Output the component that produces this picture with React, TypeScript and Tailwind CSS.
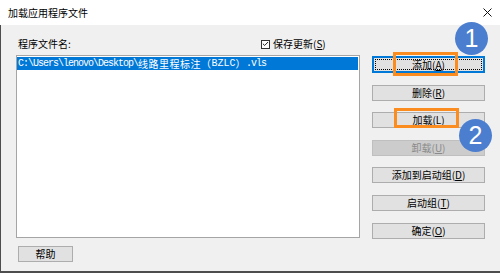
import { Check } from "lucide-react";

const buttons = [
  { label: "删除", key: "R" },
  { label: "加载", key: "L" },
  { label: "卸载", key: "U", disabled: true },
  { label: "添加到启动组", key: "D" },
  { label: "启动组", key: "T" },
  { label: "确定", key: "O" },
];

function Mnemonic({ label, k }: { label: string; k: string }) {
  return (
    <span>
      {label}(<span className="underline underline-offset-1">{k}</span>)
    </span>
  );
}

export default function App() {
  return (
    <div className="relative h-[274px] w-[500px] overflow-hidden bg-white font-['Noto_Sans_CJK_SC','Microsoft_YaHei',sans-serif] text-black">
      <div className="flex h-[25px] items-center justify-between pl-[8px] pr-[8px]">
        <span className="text-[10px] leading-none">加载应用程序文件</span>
        <svg width="9" height="9" viewBox="0 0 9 9" className="text-[#111]">
          <path d="M0.5 0.5 L8.5 8.5 M8.5 0.5 L0.5 8.5" stroke="currentColor" strokeWidth="1" />
        </svg>
      </div>

      <div className="flex h-[248px] border-b-2 border-l border-[#4d4d4d] bg-[#f0f0f0]">
        <div className="ml-[15px] flex w-[344px] flex-col pt-[12px]">
          <div className="flex h-[14px] items-center pl-[2px]">
            <span className="w-[243px] text-[10px] leading-none">程序文件名:</span>
            <div className="flex items-center gap-[3px]">
              <span className="flex h-[9px] w-[9px] items-center justify-center border border-[#333] bg-white">
                <Check size={8} strokeWidth={3} />
              </span>
              <span className="text-[10px] leading-none">
                <Mnemonic label="保存更新" k="S" />
              </span>
            </div>
          </div>

          <div className="mt-[4px] h-[183px] border border-[#a5a5a5] bg-white">
            <div className="mr-[1px] mt-[1px] flex h-[13px] items-center whitespace-nowrap bg-[#0078d7] pl-[1px] text-white">
              <span className="font-['Liberation_Mono',monospace] text-[10px] tracking-[-1px]">C:\Users\lenovo\Desktop\</span>
              <span className="text-[10px] tracking-[0.5px]">线路里程标注（</span>
              <span className="font-['Liberation_Mono',monospace] text-[10px] tracking-[0px]">BZLC</span>
              <span className="text-[10px] tracking-[0.5px]">）</span>
              <span className="font-['Liberation_Mono',monospace] text-[10px] tracking-[-1px]">.vls</span>
            </div>
          </div>

          <button className="ml-[2px] mt-[8px] flex h-[16px] w-[55px] items-center justify-center border border-[#adadad] bg-[#e1e1e1] text-[10px] leading-none">
            帮助
          </button>
        </div>

        <div className="ml-[12px] flex w-[113px] flex-col gap-[11.6px] pt-[31px]">
          <button className="flex h-[17px] items-center justify-center border-2 border-[#0078d7] bg-[#e1e1e1] text-[10px] leading-none outline-1 outline-offset-[-4px] outline-black outline-dotted">
            <Mnemonic label="添加" k="A" />
          </button>
          {buttons.map((b) => (
            <button
              key={b.label}
              className={[
                "flex h-[16px] items-center justify-center border text-[10px] leading-none",
                b.disabled ? "border-[#bfbfbf] bg-[#cccccc] text-[#8a8a8a]" : "border-[#adadad] bg-[#e1e1e1]",
              ].join(" ")}
            >
              <Mnemonic label={b.label} k={b.key} />
            </button>
          ))}
        </div>
      </div>

      {/* annotations */}
      <div className="absolute left-[393px] top-[52px] h-[24px] w-[65px] border-[3px] border-[#fb8c1f]" />
      <div className="absolute left-[394px] top-[108px] h-[20px] w-[65px] border-[3px] border-[#fb8c1f]" />
      <div className="absolute left-[455px] top-[22px] flex h-[33px] w-[33px] items-center justify-center rounded-full bg-[#4c7ed0] font-['Liberation_Sans',sans-serif] text-[25px] leading-none text-white">
        1
      </div>
      <div className="absolute left-[459px] top-[119px] flex h-[33px] w-[33px] items-center justify-center rounded-full bg-[#4c7ed0] font-['Liberation_Sans',sans-serif] text-[25px] leading-none text-white">
        2
      </div>
    </div>
  );
}
